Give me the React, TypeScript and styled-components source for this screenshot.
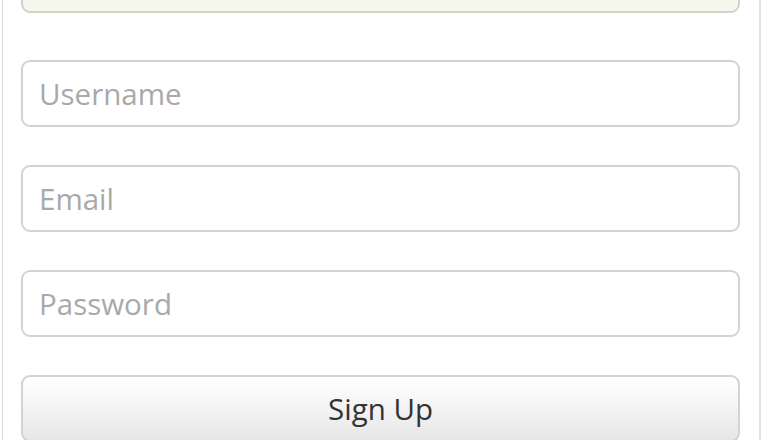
import React from "react";
import styled, { createGlobalStyle } from "styled-components";

const GlobalStyle = createGlobalStyle`
  html, body {
    margin: 0;
    padding: 0;
    background: #ffffff;
    overflow: hidden;
  }
  body {
    font-family: "Open Sans", "Noto Sans", sans-serif;
  }
`;

const Page = styled.div`
  width: 780px;
  height: 440px;
  padding-left: 2px;
  box-sizing: border-box;
  overflow: hidden;
`;

const Card = styled.form`
  width: 759px;
  box-sizing: border-box;
  margin-top: -54px;
  padding: 0 19px 0 18px;
  border-left: 1px solid #dcdcdc;
  border-right: 2px solid #e2e2e2;
  display: flex;
  flex-direction: column;
  gap: 38px;
`;

const Notice = styled.div`
  height: 67px;
  box-sizing: border-box;
  margin-bottom: 9px;
  border: 2px solid #d2d3c8;
  border-radius: 9px;
  background: #f6f7ec;
`;

const Field = styled.input`
  display: block;
  width: 100%;
  height: 67px;
  box-sizing: border-box;
  padding: 0 16px;
  border: 2px solid #d3d3d3;
  border-radius: 9px;
  background: #ffffff;
  font-family: "Open Sans", "Noto Sans", sans-serif;
  font-size: 29.5px;
  color: #444;
  outline: none;

  &::placeholder {
    color: #a9a9a9;
  }
`;

const SubmitButton = styled.button`
  display: block;
  width: 100%;
  height: 67px;
  box-sizing: border-box;
  border: 2px solid #d3d3d3;
  border-radius: 9px;
  background: linear-gradient(to bottom, #ffffff 0%, #f3f3f3 50%, #e6e6e6 100%);
  font-family: "Open Sans", "Noto Sans", sans-serif;
  font-size: 29.5px;
  color: #333333;
  padding: 0;
  cursor: pointer;
`;

const App = () => {
  return (
    <>
      <GlobalStyle />
      <Page>
        <Card onSubmit={(e) => e.preventDefault()}>
          <Notice />
          <Field type="text" placeholder="Username" />
          <Field type="email" placeholder="Email" />
          <Field type="password" placeholder="Password" />
          <SubmitButton type="submit">Sign Up</SubmitButton>
        </Card>
      </Page>
    </>
  );
};

export default App;
